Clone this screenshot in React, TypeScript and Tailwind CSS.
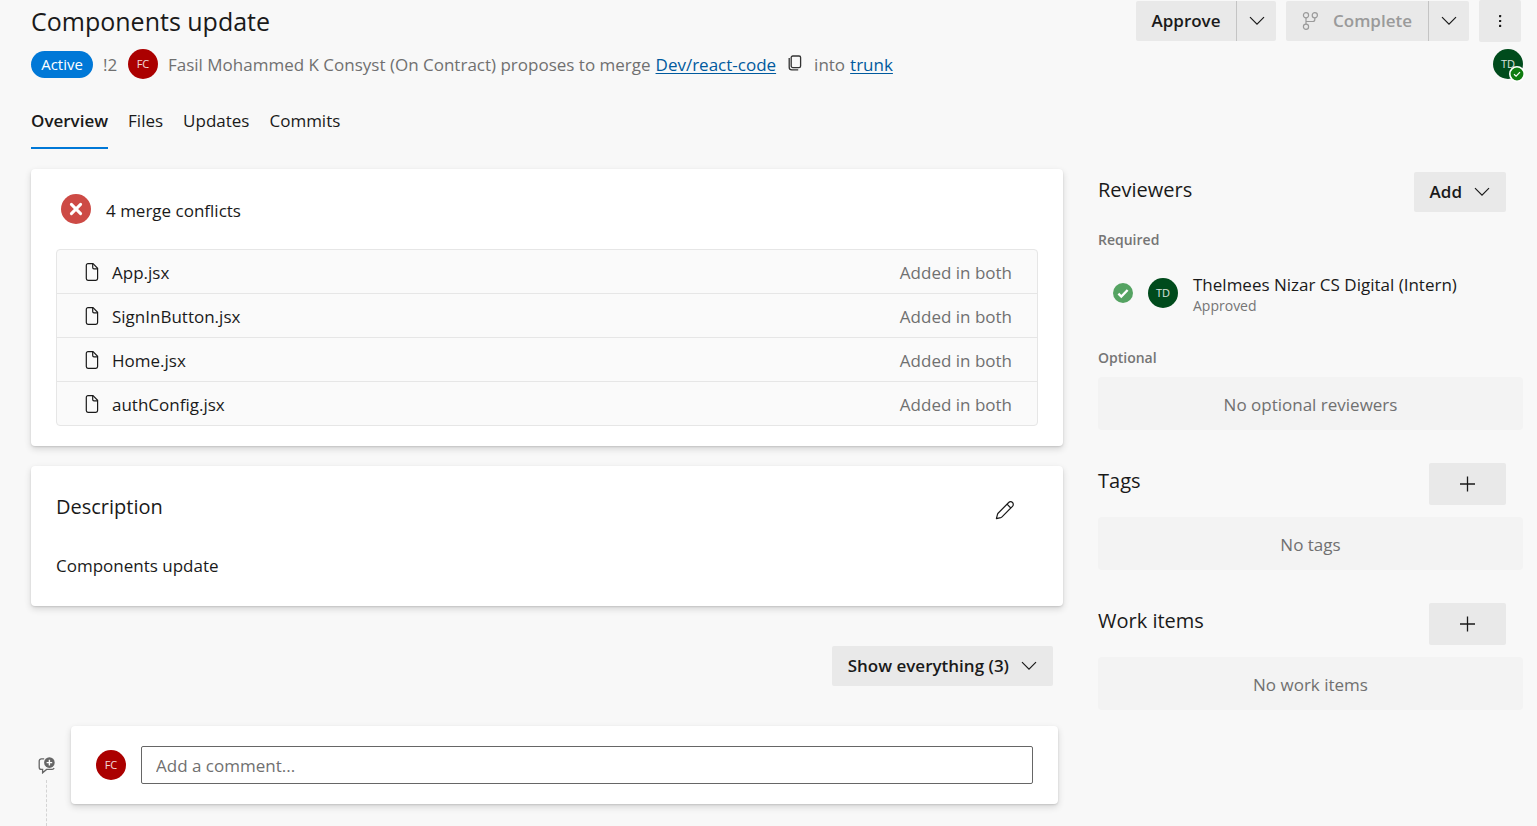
import type { ReactNode } from "react";

const conflicts = ["App.jsx", "SignInButton.jsx", "Home.jsx", "authConfig.jsx"];
const tabs = ["Overview", "Files", "Updates", "Commits"];

function ChevronDown() {
  return (
    <svg width="16" height="16" viewBox="0 0 16 16" fill="none" stroke="currentColor" strokeWidth="1.2" aria-hidden="true">
      <path d="M1 4.2 8 11.2l7-7" />
    </svg>
  );
}

function BranchIcon() {
  return (
    <svg width="17" height="18" viewBox="0 0 17 18" fill="none" stroke="currentColor" strokeWidth="1.2" aria-hidden="true">
      <circle cx="4" cy="3.3" r="2.6" />
      <circle cx="12.8" cy="3.3" r="2.6" />
      <circle cx="4" cy="14.7" r="2.6" />
      <path d="M4 5.9v6.2M12.8 5.9v1.6a2 2 0 0 1-2 2H4" />
    </svg>
  );
}

function MoreIcon() {
  return (
    <svg width="16" height="16" viewBox="0 0 16 16" fill="currentColor" aria-hidden="true">
      <rect x="7" y="2" width="2.2" height="2.2" rx="0.6" />
      <rect x="7" y="6.9" width="2.2" height="2.2" rx="0.6" />
      <rect x="7" y="11.8" width="2.2" height="2.2" rx="0.6" />
    </svg>
  );
}

function CopyIcon() {
  return (
    <svg width="14" height="16" viewBox="0 0 14 16" fill="none" stroke="currentColor" strokeWidth="1.3" aria-hidden="true">
      <rect x="3.2" y="1" width="9.4" height="11.6" rx="1.6" />
      <path d="M1.2 3v9.2a2.6 2.6 0 0 0 2.6 2.6h6.4" />
    </svg>
  );
}

function FileIcon() {
  return (
    <svg width="14" height="18" viewBox="0 0 14 18" fill="none" stroke="currentColor" strokeWidth="1.2" aria-hidden="true">
      <path d="M3 .7h5l4.6 4.6v10.3a1.7 1.7 0 0 1-1.7 1.7H3a1.7 1.7 0 0 1-1.7-1.7V2.4A1.7 1.7 0 0 1 3 .7Z" />
      <path d="M7.7.9v3.6A1.3 1.3 0 0 0 9 5.8h3.5" />
    </svg>
  );
}

function PencilIcon() {
  return (
    <svg width="20" height="20" viewBox="0 0 20 20" fill="none" stroke="currentColor" strokeWidth="1.2" strokeLinejoin="round" aria-hidden="true">
      <path d="M13.7 2.5a2.65 2.65 0 0 1 3.8 3.8L7 16.8a3 3 0 0 1-1.3.8L1.4 18.7l1.1-4.3a3 3 0 0 1 .8-1.4Z" />
      <path d="m12 4.2 3.8 3.8" />
    </svg>
  );
}

function PlusIcon() {
  return (
    <svg width="16" height="16" viewBox="0 0 16 16" fill="none" stroke="currentColor" strokeWidth="1.3" aria-hidden="true">
      <path d="M7.5 .5v15M0 8h15" />
    </svg>
  );
}

function AddCommentIcon() {
  return (
    <svg width="18" height="17" viewBox="0 0 18 17" fill="none" aria-hidden="true">
      <path
        d="M6.2 1.8H3.4A2.2 2.2 0 0 0 1.2 4v6.2a2.2 2.2 0 0 0 2.2 2.2h1.2v3.4l4-3.4h5.6a2.2 2.2 0 0 0 1.9-1.3"
        stroke="#666"
        strokeWidth="1.3"
      />
      <circle cx="11.4" cy="5.6" r="5.3" fill="#666" />
      <path d="M11.4 2.8v5.6M8.6 5.6h5.6" stroke="#fff" strokeWidth="1.4" />
    </svg>
  );
}

function ErrorBadge() {
  return (
    <svg width="30" height="30" viewBox="0 0 30 30" aria-hidden="true">
      <circle cx="15" cy="15" r="15" fill="#cd4a45" />
      <path d="m10.4 10.4 9.2 9.2m0-9.2-9.2 9.2" stroke="#fff" strokeWidth="3" strokeLinecap="round" />
    </svg>
  );
}

function ApprovedBadge() {
  return (
    <svg width="20" height="20" viewBox="0 0 20 20" aria-hidden="true">
      <circle cx="10" cy="10" r="10" fill="#55a362" />
      <path d="m5.4 10.6 2.9 2.9 6.3-6.5" fill="none" stroke="#fff" strokeWidth="2.4" />
    </svg>
  );
}

function Avatar({ initials, color }: { initials: string; color: string }) {
  return (
    <span className={`flex size-[30px] shrink-0 items-center justify-center rounded-full text-[11px] font-normal text-white/85 ${color}`}>
      {initials}
    </span>
  );
}

function Card({ className, children }: { className: string; children: ReactNode }) {
  return (
    <section className={`rounded bg-white shadow-[0_3px_7px_rgba(0,0,0,0.14),0_1px_2px_rgba(0,0,0,0.12)] ${className}`}>
      {children}
    </section>
  );
}

function EmptyBox({ children }: { children: ReactNode }) {
  return <p className="flex h-[53px] items-center justify-center rounded bg-[#f3f3f3] pt-0.5 text-[#707070]">{children}</p>;
}

function AddSection({ title, empty }: { title: string; empty: string }) {
  return (
    <section className="mt-[33px]">
      <div className="mb-3 flex items-start justify-between pr-[17px]">
        <h2 className="pt-1 text-[20px] leading-7 font-normal">{title}</h2>
        <button type="button" aria-label={`Add ${title}`} className="flex h-[42px] w-[77px] items-center justify-center rounded-xs bg-[#e9e9e9]">
          <PlusIcon />
        </button>
      </div>
      <EmptyBox>{empty}</EmptyBox>
    </section>
  );
}

export default function App() {
  return (
    <div className="min-h-screen bg-[#f8f8f8] pr-3.5 pl-[31px] font-['Open_Sans','Noto_Sans',sans-serif] text-[17px] leading-6 font-[375] text-[#1a1a1a]">
      <header>
        <div className="flex h-[42px] items-start justify-between">
          <h1 className="pt-[5px] text-[25px] leading-8 font-normal">Components update</h1>
          <div className="flex items-center gap-2.5 pr-0.5 font-[580]">
            <div className="flex h-10">
              <button type="button" className="w-[100px] rounded-l-xs bg-[#e9e9e9]">Approve</button>
              <button type="button" aria-label="Approve options" className="flex w-10 items-center justify-center rounded-r-xs border-l border-[#c4c4c4] bg-[#e9e9e9]">
                <ChevronDown />
              </button>
            </div>
            <div className="flex h-10">
              <button type="button" disabled className="flex w-[142px] items-center justify-center gap-3.5 rounded-l-xs bg-[#e9e9e9] text-[#9a9a9a]">
                <BranchIcon />
                Complete
              </button>
              <button type="button" aria-label="Complete options" className="flex w-[41px] items-center justify-center rounded-r-xs border-l border-[#c4c4c4] bg-[#e9e9e9]">
                <ChevronDown />
              </button>
            </div>
            <button type="button" aria-label="More actions" className="flex size-[42px] items-center justify-center rounded-xs bg-[#e9e9e9]">
              <MoreIcon />
            </button>
          </div>
        </div>

        <div className="mt-[7px] flex items-center justify-between">
          <div className="flex items-center text-[#707070]">
            <span className="flex h-[27px] w-[62px] items-center justify-center rounded-full bg-[#0078d7] text-[15px] font-normal text-white">Active</span>
            <span className="ml-2.5 w-[15px] pt-0.5">!2</span>
            <span className="ml-2.5">
              <Avatar initials="FC" color="bg-[#ab0000]" />
            </span>
            <span className="ml-2.5 pt-0.5 whitespace-nowrap">Fasil Mohammed K Consyst (On Contract) proposes to merge</span>
            <a href="#source" className="ml-[5px] pt-0.5 text-[#005a9e] underline underline-offset-2">Dev/react-code</a>
            <button type="button" aria-label="Copy source branch name" className="mx-3 pb-0.5 text-[#333]">
              <CopyIcon />
            </button>
            <span className="pt-0.5">into</span>
            <a href="#target" className="ml-[5px] pt-0.5 text-[#005a9e] underline underline-offset-2">trunk</a>
          </div>
          <span className="relative">
            <Avatar initials="TD" color="bg-[#004b1c]" />
            <svg className="absolute top-[17px] left-4" width="16" height="16" viewBox="0 0 16 16" aria-hidden="true">
              <circle cx="8" cy="8" r="7.2" fill="#107c10" stroke="#fff" strokeWidth="1.6" />
              <path d="m5 8.2 2.1 2L11 6.2" fill="none" stroke="#fff" strokeWidth="1.2" />
            </svg>
          </span>
        </div>

        <nav className="mt-[30px] flex gap-5">
          {tabs.map((tab) => (
            <a
              key={tab}
              href={`#${tab}`}
              className={tab === "Overview" ? "h-10 border-b-2 border-[#0078d7] font-[580]" : "h-10"}
            >
              {tab}
            </a>
          ))}
        </nav>
      </header>

      <div className="mt-5 flex gap-[35px]">
        <main className="min-w-0 flex-1">
          <Card className="px-[25px] pt-[25px] pb-5">
            <div className="flex items-center gap-[15px] pl-[5px]">
              <ErrorBadge />
              <h2 className="pt-1">4 merge conflicts</h2>
            </div>
            <div className="mt-[25px] rounded border border-[#e6e6e6] bg-[#fafafa]">
              <table className="w-full">
                <tbody className="divide-y divide-[#e6e6e6]">
                  {conflicts.map((name) => (
                    <tr key={name} className="h-11 first:h-[43px]">
                      <td className="pt-0.5 pl-7">
                        <span className="flex items-center gap-[13px]">
                          <FileIcon />
                          <span className="pt-0.5">{name}</span>
                        </span>
                      </td>
                      <td className="pt-1 pr-[25px] text-right text-[#707070]">Added in both</td>
                    </tr>
                  ))}
                </tbody>
              </table>
            </div>
          </Card>

          <Card className="mt-5 h-[140px] px-[25px] pt-[27px]">
            <div className="flex items-center justify-between pr-[23px]">
              <h2 className="text-[20px] leading-7 font-normal">Description</h2>
              <button type="button" aria-label="Edit description" className="pt-1.5">
                <PencilIcon />
              </button>
            </div>
            <p className="mt-[33px]">Components update</p>
          </Card>

          <div className="mt-10 flex justify-end pr-2.5">
            <button type="button" className="flex h-10 items-center gap-3 rounded-xs bg-[#e9e9e9] px-4 font-[580]">
              Show everything (3)
              <ChevronDown />
            </button>
          </div>

          <div className="mt-10 flex pr-[5px]">
            <div className="flex w-10 flex-col items-start pt-[31px]">
              <span className="pl-[7px]">
                <AddCommentIcon />
              </span>
              <span className="mt-1.5 ml-[15px] flex-1 border-l border-dashed border-[#d4d4d4]" />
            </div>
            <Card className="mb-[22px] flex flex-1 items-center gap-[15px] px-[25px] py-5">
              <Avatar initials="FC" color="bg-[#ab0000]" />
              <input
                type="text"
                aria-label="Add a comment"
                placeholder="Add a comment..."
                className="h-[38px] min-w-0 flex-1 rounded-xs border border-[#666] bg-white px-3.5 placeholder:text-[#707070]"
              />
            </Card>
          </div>
        </main>

        <aside className="w-[425px] shrink-0 pt-[3px]">
          <section>
            <div className="flex items-start justify-between pr-[17px]">
              <h2 className="pt-1 text-[20px] leading-7 font-normal">Reviewers</h2>
              <button type="button" className="flex h-10 items-center gap-3 rounded-xs bg-[#e9e9e9] px-4 font-[580]">
                Add
                <ChevronDown />
              </button>
            </div>
            <h3 className="mt-[18px] text-[14px] leading-5 font-semibold text-[#757575]">Required</h3>
            <div className="mt-6 flex items-start gap-[15px] pl-[15px]">
              <div className="flex items-center gap-[15px] pt-1">
                <ApprovedBadge />
                <Avatar initials="TD" color="bg-[#004b1c]" />
              </div>
              <div>
                <p className="leading-[22px]">Thelmees Nizar CS Digital (Intern)</p>
                <p className="text-[14px] leading-5 font-normal text-[#757575]">Approved</p>
              </div>
            </div>
            <h3 className="mt-8 mb-[9px] text-[14px] leading-5 font-semibold text-[#757575]">Optional</h3>
            <EmptyBox>No optional reviewers</EmptyBox>
          </section>
          <AddSection title="Tags" empty="No tags" />
          <AddSection title="Work items" empty="No work items" />
        </aside>
      </div>
    </div>
  );
}
